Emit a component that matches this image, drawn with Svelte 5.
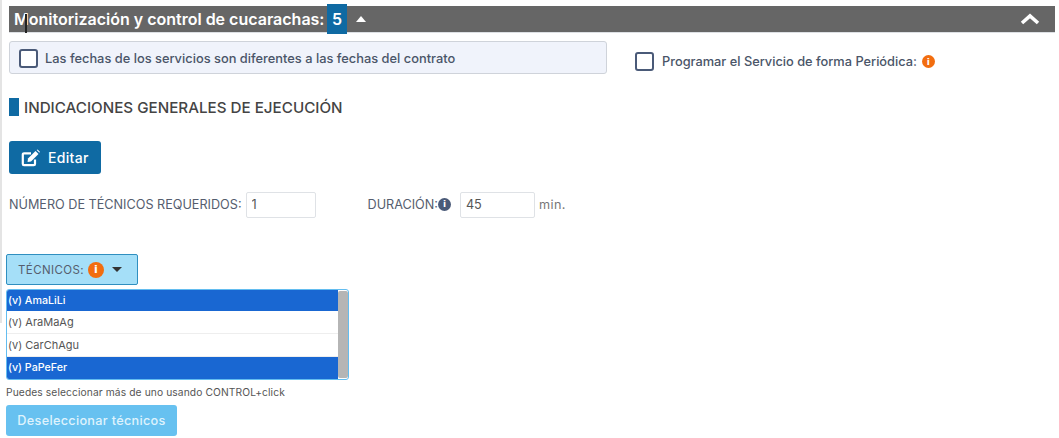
<script>
  const tecnicos = [
    { label: '(v) AmaLiLi', selected: true },
    { label: '(v) AraMaAg', selected: false },
    { label: '(v) CarChAgu', selected: false },
    { label: '(v) PaPeFer', selected: true }
  ];
</script>

<div class="page">
  <div class="title-bar">
    <span class="title-text">Monitorización y control de cucarachas:</span>
    <span class="badge">5</span>
    <span class="caret-up"></span>
    <svg class="chevron" viewBox="0 0 20 12" width="20" height="12"><path d="M2 10 L10 3 L18 10" fill="none" stroke="#fff" stroke-width="3.6" /></svg>
    <span class="ibeam"></span>
  </div>

  <div class="checks-row">
    <label class="date-box">
      <span class="check"></span>
      <span>Las fechas de los servicios son diferentes a las fechas del contrato</span>
    </label>
    <label class="periodic">
      <span class="check"></span>
      <span>Programar el Servicio de forma Periódica:</span>
      <span class="info small orange">i</span>
    </label>
  </div>

  <h3 class="section"><span class="mark"></span>INDICACIONES GENERALES DE EJECUCIÓN</h3>

  <button class="edit">
    <svg viewBox="0 0 20 18" width="20" height="18">
      <path d="M14 10.5 V15 a1.2 1.2 0 0 1 -1.2 1.2 H3 A1.2 1.2 0 0 1 1.8 15 V5.5 A1.2 1.2 0 0 1 3 4.3 H10" fill="none" stroke="#fff" stroke-width="2.2" />
      <path d="M7 9.5 L14.5 2 L17.5 5 L10 12.5 L6.6 13 Z" fill="#fff" />
      <path d="M15.6 1 L16.6 0.4 L18.9 2.7 L18.4 3.8 Z" fill="#fff" />
    </svg>
    Editar
  </button>

  <div class="fields">
    <span>NÚMERO DE TÉCNICOS REQUERIDOS:</span>
    <input class="num" value="1" />
    <span class="dur">DURACIÓN:</span>
    <span class="info slate">i</span>
    <input class="mins" value="45" />
    <span class="unit">min.</span>
  </div>

  <button class="tec-toggle">
    TÉCNICOS:
    <span class="info big orange">i</span>
    <span class="caret-down"></span>
  </button>

  <div class="listbox">
    <div class="options">
      {#each tecnicos as t}
        <div class="opt" class:selected={t.selected}>{t.label}</div>
      {/each}
    </div>
    <div class="scroll"></div>
  </div>
  <p class="hint">Puedes seleccionar más de uno usando CONTROL+click</p>
  <button class="deselect">Deseleccionar técnicos</button>
</div>

<style>
  :global(body) { background: #fff; overflow: hidden; }
  .page {
    width: 1059px; height: 438px; box-sizing: border-box; position: relative;
    padding: 6px 4px 0 9px;
    font-family: Inter, "Liberation Sans", sans-serif; color: #4a5568;
  }
  .page::before {
    content: ''; position: absolute; left: 0; top: 0; width: 2px; height: 323px; background: #e4e4e4;
  }

  .title-bar {
    height: 26px; background: #666; display: flex; align-items: center;
    position: relative; padding-left: 5px;
    border-bottom: 1px solid #dde0e4;
  }
  .title-text { color: #fff; font-size: 16px; font-weight: 600; white-space: nowrap; }
  .badge {
    position: absolute; left: 318px; top: -2px; width: 20px; height: 30px;
    background: #0f6aa3; color: #fff; font-size: 16px; font-weight: 600;
    display: flex; align-items: center; justify-content: center;
  }
  .caret-up {
    position: absolute; left: 347px; top: 10px;
    border-left: 5px solid transparent; border-right: 5px solid transparent; border-bottom: 6px solid #fff;
  }
  .chevron { position: absolute; right: 15px; top: 7px; }
  .ibeam {
    position: absolute; left: 16px; top: 8px; width: 2px; height: 19px; background: #222;
  }

  .checks-row { display: flex; align-items: center; margin-top: 8px; }
  .date-box {
    width: 598px; height: 33px; box-sizing: border-box; display: flex; align-items: center; gap: 7px;
    padding: 2px 0 0 9px; background: #f0f3fb; border: 1px solid #cfd3da; border-radius: 3px;
    font-size: 12.85px; font-weight: 500;
  }
  .check {
    width: 19px; height: 19px; box-sizing: border-box; flex-shrink: 0;
    border: 2px solid #4a5a78; border-radius: 3px; background: #fff;
  }
  .periodic { display: flex; align-items: center; gap: 8px; margin-left: 28px; margin-top: 8px; font-size: 12.8px; font-weight: 500; }

  .info {
    display: inline-flex; align-items: center; justify-content: center; border-radius: 50%;
    color: #fff; font-weight: 800; font-family: "DejaVu Sans", sans-serif;
  }
  .orange { background: #f26d0f; }
  .slate { background: #4a5a78; width: 13px; height: 13px; font-size: 9px; }
  .small { width: 13px; height: 13px; font-size: 9px; margin-left: -3px; }
  .big { width: 16px; height: 16px; font-size: 11px; }

  .section {
    display: flex; align-items: center; gap: 5px; margin: 24px 0 0;
    font-size: 15.2px; font-weight: 500; color: #444; height: 18px;
  }
  .mark { width: 10px; height: 18px; background: #0f6aa3; }

  .edit {
    display: flex; align-items: center; gap: 7px; margin-top: 25px;
    width: 92px; height: 33px; padding: 0 0 0 12px; box-sizing: border-box;
    background: #0f6aa3; color: #fff; border: none; border-radius: 3px;
    font: 500 14px Inter, "Liberation Sans", sans-serif; letter-spacing: 0.3px;
  }

  .fields { display: flex; align-items: center; margin-top: 18px; font-size: 12.65px; height: 26px; color: #555d6e; }
  .fields span, .fields input { position: relative; top: -1px; }
  .fields input {
    top: 0;
    height: 26px; box-sizing: border-box; border: 1px solid #dfe2e6; border-radius: 2px;
    font: 12.65px Inter, "Liberation Sans", sans-serif; color: #555; padding: 0 5px 2px; outline: none;
  }
  .num { width: 70px; margin-left: 4px; }
  .dur { margin-left: 52px; }
  .mins { width: 75px; margin-left: 9px; }
  .unit { margin-left: 4px; letter-spacing: 0.4px; color: #777; }

  .tec-toggle {
    display: flex; align-items: center; gap: 4px; margin: 36px 0 0 -3px;
    width: 132px; height: 31px; padding: 0 0 0 11px; box-sizing: border-box;
    background: #a5dff8; border: 1px solid #2f8fc0; border-radius: 2px;
    font: 11.5px Inter, "Liberation Sans", sans-serif; color: #555d6e; letter-spacing: 0.4px;
  }
  .caret-down {
    margin-left: 4px;
    border-left: 5px solid transparent; border-right: 5px solid transparent; border-top: 5px solid #333;
  }

  .listbox {
    display: flex; width: 343px; height: 91px; box-sizing: border-box; margin: 4px 0 0 -3px;
    border: 1px solid #63bdf0; border-radius: 3px; overflow: hidden; background: #fff;
  }
  .options { flex: 1; }
  .opt {
    height: 23px; line-height: 22px; box-sizing: border-box; padding-left: 1px;
    font-size: 11px; color: #555; border-bottom: 1px solid #eee;
  }
  .opt:first-child { height: 21px; line-height: 21px; }
  .opt.selected { background: #1967d2; color: #fff; border-bottom: none; font-weight: 500; font-size: 10.7px; }
  .scroll { width: 10px; background: #b5b5b5; border-radius: 2px; margin: 1px 0; }

  .hint { margin: 6px 0 0 -3px; font-size: 10.25px; line-height: 12px; color: #555; letter-spacing: 0.1px; }

  .deselect {
    display: block; margin: 7px 0 0 -3px; width: 171px; height: 31px; box-sizing: border-box;
    background: #67c1f0; color: #dff3fd; border: none; border-radius: 3px; padding: 0;
    font: 500 12.7px Inter, "Liberation Sans", sans-serif; letter-spacing: 0.3px;
  }
</style>
